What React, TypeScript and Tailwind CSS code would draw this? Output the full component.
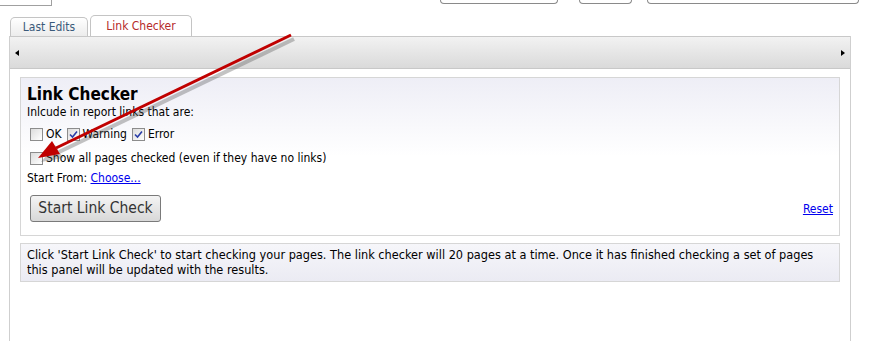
import React from "react";

const font = { fontFamily: '"DejaVu Sans Condensed", "DejaVu Sans", Tahoma, sans-serif' };

function Box({ checked }: { checked?: boolean }) {
  return (
    <span className="inline-flex h-[13px] w-[13px] shrink-0 items-center justify-center border border-[#8c8c8c] bg-gradient-to-br from-[#dcdcdc] to-white">
      {checked && (
        <svg width="9" height="9" viewBox="0 0 9 9">
          <path d="M1 4.5 L3.5 7 L8 1.5" fill="none" stroke="#2a3ea8" strokeWidth="1.6" />
        </svg>
      )}
    </span>
  );
}

export default function App() {
  return (
    <div className="relative h-[341px] w-[870px] overflow-hidden bg-white text-[12px] text-black" style={font}>
      {/* top strip */}
      <div className="flex h-[6px]">
        <div className="h-[6px] w-[52px] border-b border-r border-[#a0a0a0]" />
        <div className="ml-[388px] h-[4px] w-[118px] rounded-b border-x border-b border-[#8a8a8a]" />
        <div className="ml-[21px] h-[4px] w-[53px] rounded-b border-x border-b border-[#8a8a8a]" />
        <div className="ml-[15px] h-[4px] w-[212px] rounded-b border-x border-b border-[#8a8a8a]" />
      </div>

      {/* tabs */}
      <div className="mt-[9px] ml-[10px] flex h-[21px] items-end gap-[2px]">
        <div className="flex h-[19px] w-[78px] items-center justify-center rounded-t-[5px] border border-b-0 border-[#c4c4c4] bg-gradient-to-b from-white to-[#ececec] text-[#3b5a7a]">
          Last Edits
        </div>
        <div className="flex h-[21px] w-[102px] items-center justify-center rounded-t-[5px] border border-b-0 border-[#c4c4c4] bg-white text-[#b52a2a]">
          Link Checker
        </div>
      </div>

      {/* panel */}
      <div className="ml-[9px] h-[306px] w-[842px] border-x border-[#cfcfcf]">
        <div className="flex h-[33px] items-center justify-between border-y border-[#c8c8c8] bg-gradient-to-b from-[#f2f2f2] to-[#dadada] px-[5px]">
          <svg width="4" height="6" viewBox="0 0 4 6"><path d="M4 0 L0 3 L4 6 Z" fill="#000" /></svg>
          <svg width="4" height="6" viewBox="0 0 4 6"><path d="M0 0 L4 3 L0 6 Z" fill="#000" /></svg>
        </div>

        <div className="mx-[10px] mt-[8px] h-[159px] border border-[#d6d6d6] bg-gradient-to-b from-[#eeeef6] via-white to-white px-[6px] pt-[5px]">
          <div className="text-[17px] font-bold leading-[22px]">Link Checker</div>
          <div className="leading-[15px]">Inlcude in report links that are:</div>
          <div className="mt-[7px] flex items-center gap-[3px] pl-[3px] leading-[15px]">
            <Box />
            <span className="mr-[2px]">OK</span>
            <Box checked />
            <span className="mr-[2px]">Warning</span>
            <Box checked />
            <span>Error</span>
          </div>
          <div className="mt-[9px] flex items-center gap-[3px] pl-[3px] leading-[15px]">
            <Box />
            <span>Show all pages checked (even if they have no links)</span>
          </div>
          <div className="mt-[5px] leading-[15px]">
            Start From: <span className="text-[#0000ee] underline">Choose...</span>
          </div>
          <div className="flex items-start justify-between">
            <button
              className="mt-[9px] ml-[3px] h-[27px] w-[131px] rounded-[3px] border border-[#7a7a7a] bg-gradient-to-b from-[#f4f4f4] to-[#d8d8d8] text-[15.5px] text-[#333]"
              style={font}
            >
              Start Link Check
            </button>
            <span className="mt-[14px] text-[#0000ee] underline">Reset</span>
          </div>
        </div>

        <div className="mx-[10px] mt-[7px] h-[39px] border border-[#d6d6d6] bg-gradient-to-b from-[#f6f6fa] to-[#ebebf3] px-[6px] pt-[3px] text-[12.6px] leading-[15px]">
          Click 'Start Link Check' to start checking your pages. The link checker will 20 pages at a time. Once it has finished checking a set of pages
          <br />
          this panel will be updated with the results.
        </div>
      </div>

      {/* annotation arrow */}
      <svg className="pointer-events-none absolute left-0 top-0" width="870" height="341">
        <g transform="translate(3,4)" opacity="0.35">
          <line x1="291" y1="35" x2="56" y2="148" stroke="#555" strokeWidth="4" />
          <path d="M38 158 L52 141 L60 154 Z" fill="#555" />
        </g>
        <line x1="291" y1="35" x2="56" y2="148" stroke="#c00000" strokeWidth="3" />
        <path d="M38 158 L52 141 L60 154 Z" fill="#c00000" />
      </svg>
    </div>
  );
}
